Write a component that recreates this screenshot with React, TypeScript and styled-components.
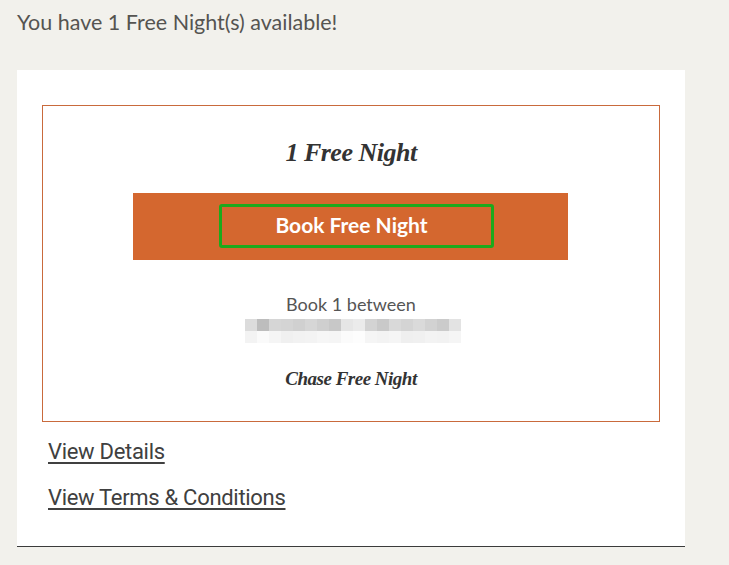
import React from 'react';
import styled, { createGlobalStyle } from 'styled-components';

const GlobalStyle = createGlobalStyle`
  body {
    margin: 0;
    background: #f2f1ec;
    font-family: Lato, 'Liberation Sans', sans-serif;
    color: #4d4d4d;
  }
`;

const Page = styled.div`
  padding: 9px 0 0 17px;
  width: 668px;
`;

const Heading = styled.div`
  font-size: 21.5px;
  line-height: 26px;
  color: #555451;
`;

const Card = styled.div`
  margin-top: 35px;
  background: #fff;
  padding: 35px 25px 0;
  height: 477px;
  box-sizing: border-box;
  border-bottom: 1px solid #3b3b3b;
`;

const OfferBox = styled.div`
  border: 1px solid #c96a3c;
  height: 317px;
  box-sizing: border-box;
  display: flex;
  flex-direction: column;
  align-items: center;
  padding-top: 32px;
`;

const SerifTitle = styled.div<{ $size: number }>`
  font-family: 'Liberation Serif', serif;
  font-style: italic;
  font-weight: 700;
  font-size: ${(p) => p.$size}px;
  line-height: 30px;
  color: #333;
  letter-spacing: -0.5px;
`;

const BookButton = styled.button`
  margin: 25px 1px 0 0;
  width: 435px;
  height: 67px;
  background: #d4672f;
  border: none;
  padding: 0 0 1px 12px;
  display: flex;
  align-items: center;
  justify-content: center;
  cursor: pointer;
`;

const FocusLabel = styled.span`
  width: 275px;
  height: 44px;
  box-sizing: border-box;
  border: 3px solid #1caa1c;
  border-radius: 3px;
  padding: 0 10px 4px 0;
  display: flex;
  align-items: center;
  justify-content: center;
  font-family: Lato, 'Liberation Sans', sans-serif;
  font-weight: 700;
  font-size: 21px;
  color: #fff;
`;

const Dates = styled.div`
  margin-top: 33px;
  font-size: 18px;
  line-height: 22px;
  color: #555;
`;

const Blurred = styled.div`
  margin: 4px 0 0 4px;
  display: grid;
  grid-template-columns: repeat(18, 12px);
  grid-auto-rows: 12px;
`;

const Pixel = styled.span<{ $c: string }>`
  background: ${(p) => p.$c};
`;

const Footer = styled.div`
  margin-top: 21px;
`;

const Links = styled.div`
  display: flex;
  flex-direction: column;
  align-items: flex-start;
  gap: 18px;
  padding: 16px 0 0 6px;
`;

const TextLink = styled.a`
  font-family: Roboto, 'Liberation Sans', sans-serif;
  font-size: 22px;
  line-height: 28px;
  color: #404040;
  text-decoration: underline;
  text-underline-offset: 3px;
  text-decoration-thickness: 2px;
  letter-spacing: -0.3px;
`;

const row1 = ['#dcdcdc', '#bdbdbd', '#d6d6d6', '#d4d4d4', '#d0d0d0', '#d6d6d6', '#cfcfcf', '#c8c8c8', '#e6e6e6', '#ebebeb', '#d3d3d3', '#c9c9c9', '#d9d9d9', '#d4d4d4', '#dadada', '#d2d2d2', '#cbcbcb', '#e3e3e3'];
const row2 = ['#f3f3f3', '#fafafa', '#f5f5f5', '#f0f0f0', '#f2f2f2', '#f3f3f3', '#f6f6f6', '#f5f5f5', '#fbfbfb', '#fdfdfd', '#f5f5f5', '#f3f3f3', '#f5f5f5', '#efefef', '#f0f0f0', '#f3f3f3', '#f2f2f2', '#f5f5f5'];

export default function App() {
  return (
    <>
      <GlobalStyle />
      <Page>
        <Heading>You have 1 Free Night(s) available!</Heading>
        <Card>
          <OfferBox>
            <SerifTitle $size={26}>1 Free Night</SerifTitle>
            <BookButton>
              <FocusLabel>Book Free Night</FocusLabel>
            </BookButton>
            <Dates>Book 1 between</Dates>
            <Blurred>
              {[...row1, ...row2].map((c, i) => (
                <Pixel key={i} $c={c} />
              ))}
            </Blurred>
            <Footer>
              <SerifTitle $size={19}>Chase Free Night</SerifTitle>
            </Footer>
          </OfferBox>
          <Links>
            <TextLink href="#">View Details</TextLink>
            <TextLink href="#">View Terms &amp; Conditions</TextLink>
          </Links>
        </Card>
      </Page>
    </>
  );
}
